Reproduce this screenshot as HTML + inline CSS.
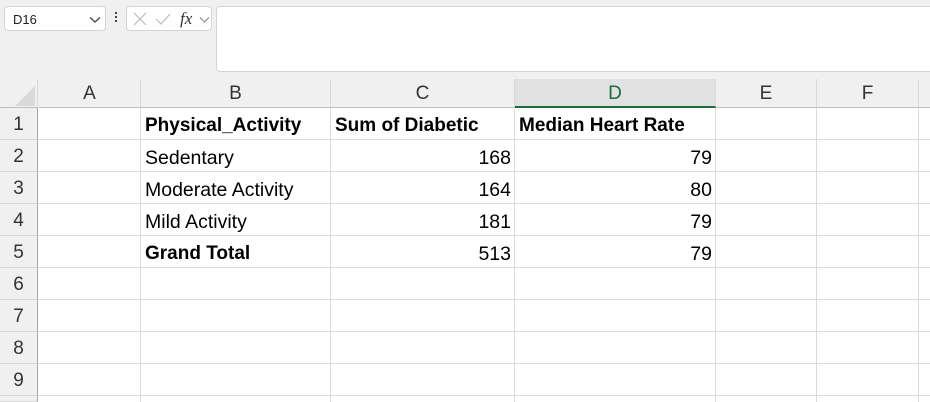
<!DOCTYPE html>
<html><head><meta charset="utf-8"><style>
*{margin:0;padding:0;box-sizing:border-box}
html{background:#fff}
body{width:930px;height:402px;overflow:hidden;background:#f0f0f0;font-family:"Liberation Sans",sans-serif;position:relative}
.a{position:absolute}
.box{background:#fff;border:1px solid #d4d4d4;border-radius:4px}
.ch{position:absolute;top:79px;height:29px;background:#f0f0f0;border-right:1px solid #d8d8d8;border-bottom:1px solid #bdbdbd;text-align:center;font-size:19px;line-height:30px;color:#333}
.rh{position:absolute;left:0;width:38px;height:32px;background:#f0f0f0;border-bottom:1px solid #d8d8d8;border-right:1px solid #a6a6a6;text-align:center;font-size:19px;line-height:34px;color:#333}
.grid{position:absolute;left:38px;top:108px;width:892px;height:294px;background:#fff}
.c{position:absolute;height:32px;font-size:19.5px;line-height:34px;color:#000;white-space:nowrap;padding:0 4px}
.b{font-weight:bold;font-size:19px}
.r{text-align:right}
</style></head><body>
<div class="a box" style="left:4px;top:6px;width:102px;height:25px"><span class="a" style="left:8px;top:5px;font-size:13px;color:#222">D16</span>
<svg class="a" style="left:84px;top:9px" width="12" height="8"><path d="M1 1.5 L6 6 L11 1.5" stroke="#444" stroke-width="1.3" fill="none"/></svg></div>
<div class="a" style="left:115px;top:12px;width:2px;height:2px;background:#444;box-shadow:0 4px 0 #444,0 8px 0 #444"></div>
<div class="a box" style="left:126px;top:6px;width:86px;height:25px">
<svg class="a" style="left:6px;top:5px" width="14" height="14"><path d="M1 1 L13 13 M13 1 L1 13" stroke="#bbb" stroke-width="1.2"/></svg>
<svg class="a" style="left:28px;top:5px" width="16" height="14"><path d="M1 7 L6 12 L15 2" stroke="#bbb" stroke-width="1.2" fill="none"/></svg>
<span class="a" style="left:53px;top:2px;font-family:'Liberation Serif',serif;font-style:italic;font-size:17px;color:#333">fx</span>
<svg class="a" style="left:72px;top:9px" width="11" height="8"><path d="M1 1.5 L5.5 6 L10 1.5" stroke="#888" stroke-width="1.1" fill="none"/></svg></div>
<div class="a box" style="left:216px;top:6px;width:730px;height:66px"></div>
<div class="a" style="left:0;top:79px;width:38px;height:29px;background:#f0f0f0;border-right:1px solid #d8d8d8;border-bottom:1px solid #bdbdbd"></div>
<svg class="a" style="left:14px;top:86px" width="22" height="20"><path d="M21 0 L21 20 L1 20 Z" fill="#d9d9d9"/></svg>
<div class="ch" style="left:39px;width:102px">A</div>
<div class="ch" style="left:141px;width:190px">B</div>
<div class="ch" style="left:331px;width:184px">C</div>
<div class="ch" style="left:515px;width:201px;background:#e1e1e1;color:#1e6b3e;border-bottom:2px solid #1e6b3e">D</div>
<div class="ch" style="left:716px;width:101px">E</div>
<div class="ch" style="left:817px;width:102px">F</div>
<div class="ch" style="left:919px;width:20px"></div>
<div class="grid">
<svg width="892" height="294" style="position:absolute;left:0;top:0">
<g stroke="#dadada" stroke-width="1">
<path d="M102.5 0V294M292.5 0V294M476.5 0V294M677.5 0V294M778.5 0V294M880.5 0V294"/>
<path d="M0 31.5H892M0 63.5H892M0 95.5H892M0 127.5H892M0 159.5H892M0 191.5H892M0 223.5H892M0 255.5H892M0 287.5H892"/>
</g></svg>
</div>
<div class="rh" style="top:108px">1</div><div class="rh" style="top:140px">2</div><div class="rh" style="top:172px">3</div><div class="rh" style="top:204px">4</div><div class="rh" style="top:236px">5</div><div class="rh" style="top:268px">6</div><div class="rh" style="top:300px">7</div><div class="rh" style="top:332px">8</div><div class="rh" style="top:364px">9</div><div class="rh" style="top:396px;height:6px"></div>
<div class="c b" style="left:141px;top:109px">Physical_Activity</div>
<div class="c b" style="left:331px;top:109px">Sum of Diabetic</div>
<div class="c b" style="left:515px;top:109px">Median Heart Rate</div>
<div class="c" style="left:141px;top:141px">Sedentary</div>
<div class="c" style="left:141px;top:173px">Moderate Activity</div>
<div class="c" style="left:141px;top:205px">Mild Activity</div>
<div class="c b" style="left:141px;top:237px">Grand Total</div>
<div class="c r" style="left:331px;width:184px;top:141px">168</div>
<div class="c r" style="left:331px;width:184px;top:173px">164</div>
<div class="c r" style="left:331px;width:184px;top:205px">181</div>
<div class="c r" style="left:331px;width:184px;top:237px">513</div>
<div class="c r" style="left:515px;width:201px;top:141px">79</div>
<div class="c r" style="left:515px;width:201px;top:173px">80</div>
<div class="c r" style="left:515px;width:201px;top:205px">79</div>
<div class="c r" style="left:515px;width:201px;top:237px">79</div>
</body></html>
